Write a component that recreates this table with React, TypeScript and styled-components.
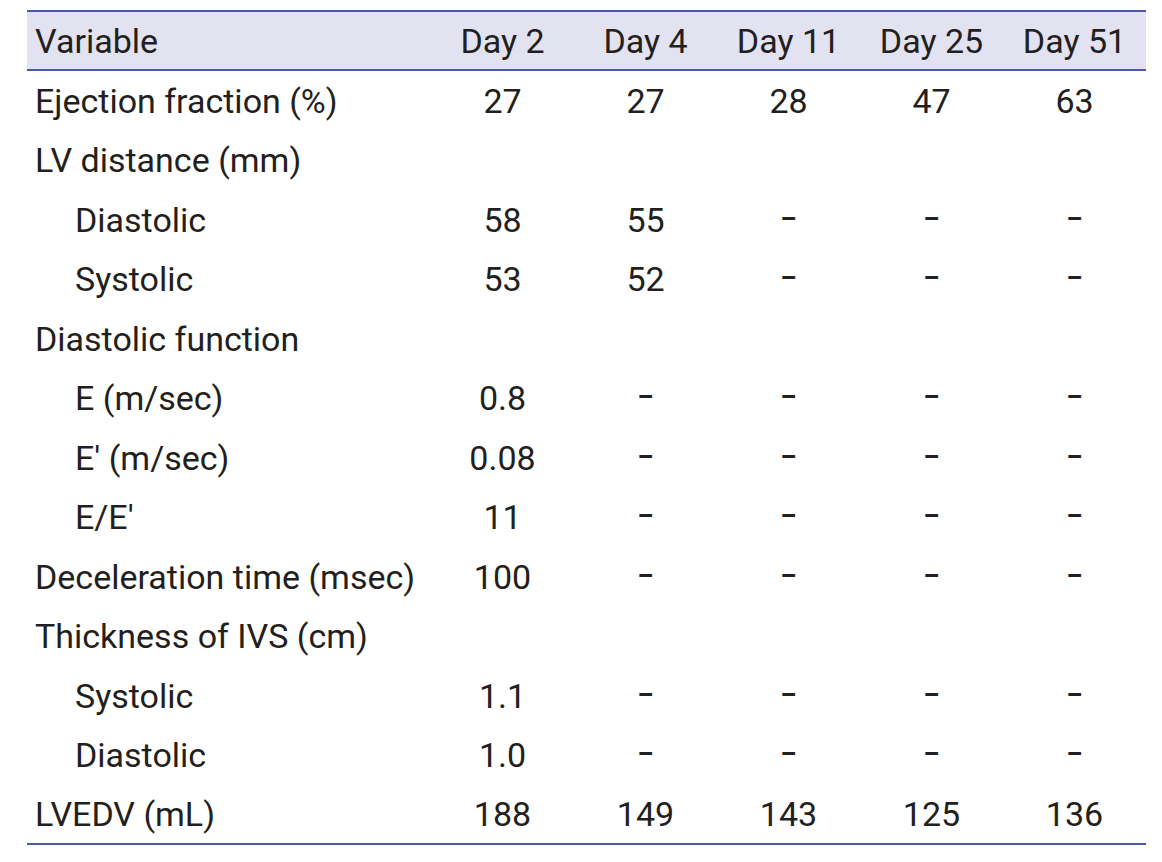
import React from 'react'
import styled, { createGlobalStyle } from 'styled-components'

const GlobalStyle = createGlobalStyle`
  html, body {
    margin: 0;
    padding: 0;
    background: #ffffff;
  }
`

const Page = styled.div`
  padding: 10px 16px 0 27px;
  font-family: Roboto, 'Liberation Sans', sans-serif;
  color: #231f20;
`

const Table = styled.table`
  width: 1119px;
  border-collapse: collapse;
  table-layout: fixed;
  font-size: 34px;
  border-bottom: 2px solid #4b57a8;
`

const HeadRow = styled.tr`
  background: #e2e2f0;
  border-top: 2px solid #4b57a8;
  border-bottom: 2px solid #4b57a8;
  height: 59px;
`

const Row = styled.tr`
  height: 59.5px;
`

const LabelCell = styled.td<{ $indent?: boolean }>`
  padding: 2px 0 0 ${p => (p.$indent ? 48 : 8)}px;
  text-align: left;
  white-space: nowrap;
`

const ValueCell = styled.td`
  padding: 2px 0 0 0;
  text-align: center;
  white-space: nowrap;
`

const HeadCell = styled.th<{ $left?: boolean }>`
  font-weight: 400;
  padding: 0 0 0 ${p => (p.$left ? 8 : 0)}px;
  text-align: ${p => (p.$left ? 'left' : 'center')};
  white-space: nowrap;
`

const Dash = styled.span`
  font-size: 25px;
  font-weight: 700;
  position: relative;
  top: -4px;
`

type RowData = { label: string; indent?: boolean; values: string[] }

const D = '-'

const rows: RowData[] = [
  { label: 'Ejection fraction (%)', values: ['27', '27', '28', '47', '63'] },
  { label: 'LV distance (mm)', values: [] },
  { label: 'Diastolic', indent: true, values: ['58', '55', D, D, D] },
  { label: 'Systolic', indent: true, values: ['53', '52', D, D, D] },
  { label: 'Diastolic function', values: [] },
  { label: 'E (m/sec)', indent: true, values: ['0.8', D, D, D, D] },
  { label: 'E\u2032 (m/sec)', indent: true, values: ['0.08', D, D, D, D] },
  { label: 'E/E\u2032', indent: true, values: ['11', D, D, D, D] },
  { label: 'Deceleration time (msec)', values: ['100', D, D, D, D] },
  { label: 'Thickness of IVS (cm)', values: [] },
  { label: 'Systolic', indent: true, values: ['1.1', D, D, D, D] },
  { label: 'Diastolic', indent: true, values: ['1.0', D, D, D, D] },
  { label: 'LVEDV (mL)', values: ['188', '149', '143', '125', '136'] }
]

const days = ['Day 2', 'Day 4', 'Day 11', 'Day 25', 'Day 51']

export default function App() {
  return (
    <>
      <GlobalStyle />
      <Page>
        <Table>
          <colgroup>
            <col style={{ width: 404 }} />
            {days.map(d => (
              <col key={d} style={{ width: 143 }} />
            ))}
          </colgroup>
          <thead>
            <HeadRow>
              <HeadCell $left>Variable</HeadCell>
              {days.map(d => (
                <HeadCell key={d}>{d}</HeadCell>
              ))}
            </HeadRow>
          </thead>
          <tbody>
            {rows.map((r, i) => (
              <Row key={i}>
                <LabelCell $indent={r.indent}>{r.label}</LabelCell>
                {days.map((d, j) => {
                  const v = r.values[j]
                  return (
                    <ValueCell key={d}>
                      {v === D ? <Dash>{'\u2013'}</Dash> : v ?? ''}
                    </ValueCell>
                  )
                })}
              </Row>
            ))}
          </tbody>
        </Table>
      </Page>
    </>
  )
}
